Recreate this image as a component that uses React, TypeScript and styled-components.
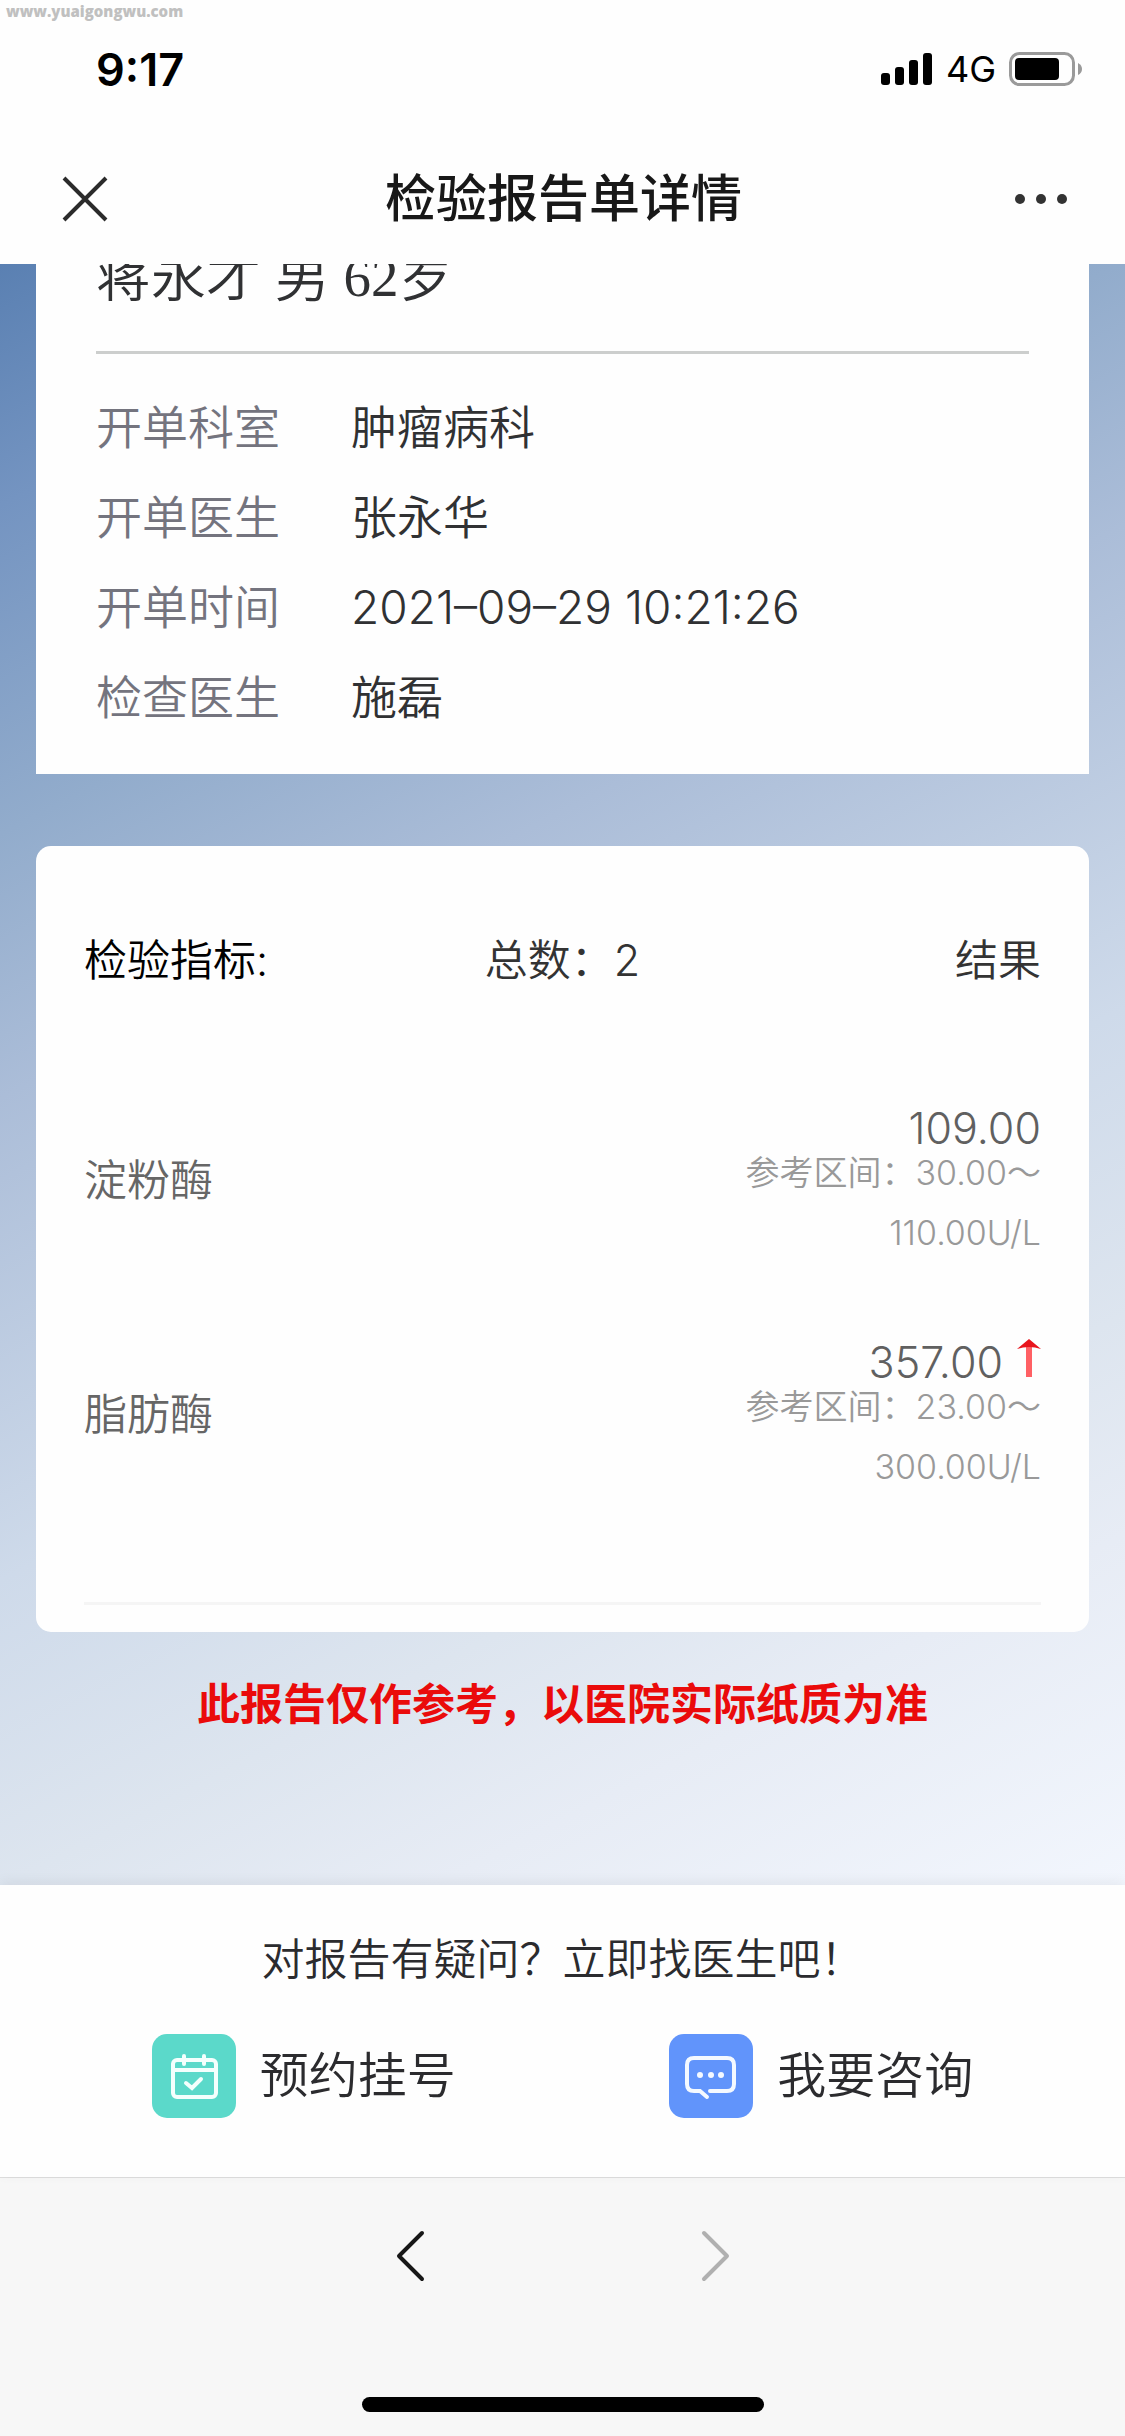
import React from "react";
import styled, { createGlobalStyle } from "styled-components";

const sans = `Inter, "Noto Sans CJK SC", sans-serif`;

const GlobalStyle = createGlobalStyle`
  *, *::before, *::after { box-sizing: border-box; }
  body { margin: 0; background: #fefefe; font-family: ${sans}; font-weight: 350; color: #303133; }
  h1, h2, p, dl, dd, dt { margin: 0; font-weight: 350; }
  button { border: 0; padding: 0; background: none; font: inherit; color: inherit; cursor: pointer; }
`;

const Screen = styled.div`
  display: flex;
  flex-direction: column;
  min-height: 100vh;
`;

const TopBar = styled.header`
  position: relative;
  background: #fefefe;
`;

const Watermark = styled.span`
  position: absolute;
  left: 6px;
  top: 2px;
  font: 800 15px/18px "Open Sans", sans-serif;
  color: #c0c0c0;
`;

const StatusBar = styled.div`
  display: flex;
  align-items: center;
  justify-content: space-between;
  height: 138px;
  padding: 0 42px 0 96px;
  color: #000;
`;

const Clock = styled.time`
  font-size: 45px;
  font-weight: 600;
`;

const StatusIcons = styled.div`
  display: flex;
  align-items: center;
  gap: 13px;
  font-size: 36px;
  font-weight: 400;
  line-height: 36px;
`;

const TitleBar = styled.div`
  display: grid;
  grid-template-columns: 1fr auto 1fr;
  align-items: center;
  height: 126px;
  padding: 0 58px 4px 60px;
`;

const Title = styled.h1`
  font-size: 51px;
  font-weight: 500;
  line-height: 72px;
  color: #181818;
`;

const IconButton = styled.button<{ $end?: boolean }>`
  display: flex;
  justify-self: ${(p) => (p.$end ? "end" : "start")};
`;

const Report = styled.main`
  flex: 1;
  display: flex;
  flex-direction: column;
  padding: 0 36px;
  overflow: hidden;
  background: linear-gradient(
    153deg,
    #5a80b2 0%,
    #7494c1 11%,
    #92accc 26%,
    #abbdd8 38%,
    #cedaea 60%,
    #dde5ef 74%,
    #e7ecf5 84%,
    #f2f6fd 100%
  );
`;

const PatientCard = styled.section`
  height: 510px;
  display: flex;
  flex-direction: column;
  justify-content: flex-end;
  padding: 0 60px 32px;
  background: #fefefe;
`;

const PatientName = styled.h2`
  padding-bottom: 34px;
  border-bottom: 3px solid #cccecd;
  font-family: "Liberation Serif", "Noto Sans CJK SC", serif;
  font-size: 55px;
  line-height: 78px;
  white-space: pre;
`;

const Details = styled.dl`
  display: grid;
  grid-template-columns: 255px 1fr;
  padding-top: 28px;
  font-size: 46px;
  line-height: 90px;
`;

const Term = styled.dt`
  color: #74747e;
`;

const Detail = styled.dd`
  color: #303133;
`;

const ResultCard = styled.section`
  margin-top: 72px;
  padding: 57px 48px 27px;
  border-radius: 15px;
  background: #fefefe;
`;

const ResultTable = styled.table`
  width: 100%;
  border-collapse: collapse;
  table-layout: fixed;
  border-bottom: 3px solid #f5f5f5;
  font-size: 43px;
`;

const HeadCell = styled.th<{ $align: string; $color: string }>`
  height: 108px;
  padding: 0;
  font-weight: 350;
  text-align: ${(p) => p.$align};
  color: ${(p) => p.$color};
`;

const Gap = styled.td<{ $size: number }>`
  height: ${(p) => p.$size}px;
  padding: 0;
`;

const ItemRow = styled.tr`
  height: 234px;
`;

const ItemName = styled.th`
  padding: 0;
  font-weight: 350;
  text-align: left;
  color: #666;
`;

const ItemResult = styled.td`
  padding: 22px 0 0;
  text-align: right;
`;

const Value = styled.div`
  display: flex;
  align-items: flex-end;
  justify-content: flex-end;
  gap: 14px;
  height: 30px;
  line-height: 30px;
  color: #606060;
`;

const Range = styled.div`
  font-size: 34px;
  line-height: 60px;
  color: #999;
`;

const Notice = styled.p`
  padding: 42px 0;
  text-align: center;
  font-size: 43px;
  font-weight: 700;
  line-height: 60px;
  color: #ea0b0b;
`;

const HelpPanel = styled.section`
  padding: 44px 45px 59px;
  background: #fefefe;
  box-shadow: 0 -3px 12px rgba(0, 0, 0, 0.06);
  z-index: 1;
`;

const HelpText = styled.p`
  padding-bottom: 45px;
  text-align: center;
  font-size: 43px;
  line-height: 60px;
  color: #2b2b2e;
`;

const Actions = styled.div`
  display: grid;
  grid-template-columns: 1fr 1fr;
`;

const Action = styled.button`
  display: flex;
  align-items: center;
  justify-content: center;
  gap: 24px;
  font-size: 49px;
  line-height: 84px;
  color: #2b2b2e;
`;

const Badge = styled.span<{ $color: string }>`
  display: flex;
  width: 84px;
  height: 84px;
  border-radius: 15px;
  background: ${(p) => p.$color};
`;

const BrowserBar = styled.footer`
  display: flex;
  flex-direction: column;
  align-items: center;
  padding: 52px 0 24px;
  border-top: 1px solid #dedede;
  background: #f7f7f7;
`;

const NavButtons = styled.nav`
  display: flex;
  gap: 274px;
  padding-bottom: 115px;
`;

const HomeIndicator = styled.div`
  width: 402px;
  height: 15px;
  border-radius: 8px;
  background: #000;
`;

const items = [
  { name: "淀粉酶", value: "109.00", low: "30.00", high: "110.00U/L", raised: false },
  { name: "脂肪酶", value: "357.00", low: "23.00", high: "300.00U/L", raised: true },
];

const details = [
  ["开单科室", "肿瘤病科"],
  ["开单医生", "张永华"],
  ["开单时间", "2021–09–29 10:21:26"],
  ["检查医生", "施磊"],
];

const Signal = () => (
  <svg width="52" height="34" viewBox="0 0 52 34" aria-hidden="true">
    <rect x="0" y="21" width="9" height="12" rx="3" />
    <rect x="14" y="15" width="9" height="18" rx="3" />
    <rect x="28" y="8" width="9" height="25" rx="3" />
    <rect x="42" y="1" width="9" height="32" rx="3" />
  </svg>
);

const Battery = () => (
  <svg width="74" height="34" viewBox="0 0 74 34" aria-hidden="true">
    <rect x="1.5" y="1.5" width="63" height="31" rx="9" fill="none" stroke="#9a9a9a" strokeWidth="3" />
    <rect x="6" y="6" width="44" height="22" rx="4" />
    <path d="M69 11 Q73 13 73 17 Q73 21 69 23 Z" fill="#9a9a9a" />
  </svg>
);

const CloseIcon = () => (
  <svg width="50" height="50" viewBox="0 0 50 50" aria-hidden="true">
    <path d="M4 4 L46 46 M46 4 L4 46" stroke="#2b2b2b" strokeWidth="4" />
  </svg>
);

const MoreIcon = () => (
  <svg width="54" height="20" viewBox="0 0 54 20" fill="#333" aria-hidden="true">
    <circle cx="7" cy="10" r="5" />
    <circle cx="28" cy="10" r="5" />
    <circle cx="49" cy="10" r="5" />
  </svg>
);

const RaisedArrow = () => (
  <svg width="24" height="38" viewBox="0 0 24 38" role="img" aria-label="偏高">
    <path d="M9 7 H15 V38 H9 Z" fill="#ff6064" />
    <path d="M12 0 L24 10 Q18 8 12 8 Q6 8 0 10 Z" fill="#e8141c" />
  </svg>
);

const CalendarIcon = () => (
  <svg width="84" height="84" viewBox="0 0 84 84" fill="none" stroke="#f4fffd" strokeWidth="4" strokeLinecap="round" aria-hidden="true">
    <rect x="21" y="26" width="43" height="37" rx="4" />
    <path d="M21 36 H64" />
    <path d="M32 22 V30 M52 22 V30" />
    <path d="M34 49 L40 54 L49 45" />
  </svg>
);

const ChatIcon = () => (
  <svg width="84" height="84" viewBox="0 0 84 84" fill="none" stroke="#f4f9ff" strokeWidth="4" strokeLinecap="round" aria-hidden="true">
    <path d="M41 57 H58 Q65 57 65 50 V31 Q65 24 58 24 H25 Q18 24 18 31 V50 Q18 57 25 57 H31 L38 63" />
    <g fill="#f4f9ff" stroke="none">
      <circle cx="31" cy="41" r="3" />
      <circle cx="42" cy="41" r="3" />
      <circle cx="52" cy="41" r="3" />
    </g>
  </svg>
);

const Chevron = ({ forward }: { forward?: boolean }) => (
  <svg width="30" height="52" viewBox="0 0 30 52" fill="none" stroke={forward ? "#b0b0b0" : "#171717"} strokeWidth="4" strokeLinecap="round" strokeLinejoin="round" aria-hidden="true">
    <path d={forward ? "M4 3 L27 26 L4 49" : "M26 3 L3 26 L26 49"} />
  </svg>
);

export default function App() {
  return (
    <Screen>
      <GlobalStyle />
      <TopBar>
        <Watermark>www.yuaigongwu.com</Watermark>
        <StatusBar>
          <Clock>9:17</Clock>
          <StatusIcons>
            <Signal />
            <span>4G</span>
            <Battery />
          </StatusIcons>
        </StatusBar>
        <TitleBar>
          <IconButton aria-label="关闭"><CloseIcon /></IconButton>
          <Title>检验报告单详情</Title>
          <IconButton $end aria-label="更多"><MoreIcon /></IconButton>
        </TitleBar>
      </TopBar>

      <Report>
        <PatientCard>
          <PatientName>蒋永才 男 62岁</PatientName>
          <Details>
            {details.map(([term, detail]) => (
              <React.Fragment key={term}>
                <Term>{term}</Term>
                <Detail>{detail}</Detail>
              </React.Fragment>
            ))}
          </Details>
        </PatientCard>

        <ResultCard>
          <ResultTable>
            <thead>
              <tr>
                <HeadCell scope="col" $align="left" $color="#000">检验指标:</HeadCell>
                <HeadCell scope="col" $align="center" $color="#333">总数：2</HeadCell>
                <HeadCell scope="col" $align="right" $color="#333">结果</HeadCell>
              </tr>
            </thead>
            <tbody>
              <tr><Gap colSpan={3} $size={49} /></tr>
              {items.map((item) => (
                <ItemRow key={item.name}>
                  <ItemName scope="row">{item.name}</ItemName>
                  <ItemResult colSpan={2}>
                    <Value>
                      {item.value}
                      {item.raised && <RaisedArrow />}
                    </Value>
                    <Range>参考区间：{item.low}～<br />{item.high}</Range>
                  </ItemResult>
                </ItemRow>
              ))}
              <tr><Gap colSpan={3} $size={75} /></tr>
            </tbody>
          </ResultTable>
        </ResultCard>
        <Notice>此报告仅作参考，以医院实际纸质为准</Notice>
      </Report>

      <HelpPanel>
        <HelpText>对报告有疑问？立即找医生吧！</HelpText>
        <Actions>
          <Action>
            <Badge $color="#5bd9ca"><CalendarIcon /></Badge>
            预约挂号
          </Action>
          <Action>
            <Badge $color="#6194fb"><ChatIcon /></Badge>
            我要咨询
          </Action>
        </Actions>
      </HelpPanel>

      <BrowserBar>
        <NavButtons>
          <IconButton aria-label="后退"><Chevron /></IconButton>
          <IconButton aria-label="前进" disabled><Chevron forward /></IconButton>
        </NavButtons>
        <HomeIndicator />
      </BrowserBar>
    </Screen>
  );
}
